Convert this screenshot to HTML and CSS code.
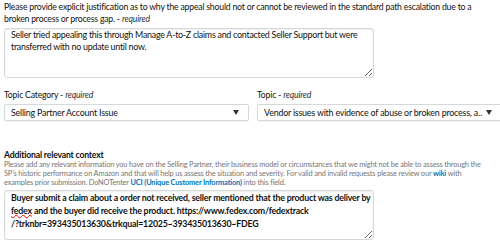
FILE: index.html
```html
<!DOCTYPE html>
<html>
<head>
<meta charset="utf-8">
<link rel="stylesheet" href="styles.css">
</head>
<body>
<div class="page">
  <div class="field">
    <div class="label">Please provide explicit justification as to why the appeal should not or cannot be reviewed in the standard path escalation due to a<br>broken process or process gap. - <i>required</i></div>
    <div class="textarea ta1">Seller tried appealing this through Manage A-to-Z claims and contacted Seller Support but were<br>transferred with no update until now.</div>
  </div>
  <div class="row">
    <div class="col">
      <div class="label">Topic Category - <i>required</i></div>
      <div class="select"><span class="sel-text">Selling Partner Account Issue</span><span class="caret"></span></div>
    </div>
    <div class="col">
      <div class="label">Topic - <i>required</i></div>
      <div class="select"><span class="sel-text">Vendor issues with evidence of abuse or broken process, a…</span><span class="caret"></span></div>
    </div>
  </div>
  <div class="field context">
    <div class="title">Additional relevant context</div>
    <div class="desc">Please add any relevant information you have on the Selling Partner, their business model or circumstances that we might not be able to assess through the<br>SP's historic performance on Amazon and that will help us assess the situation and severity. For valid and invalid requests please review our <a class="link">wiki</a> with<br>examples prior submission. DoNOTenter <a class="link">UCI (Unique Customer Information)</a> into this field.</div>
    <div class="textarea ta3">Buyer submit a claim about a order not received, seller mentioned that the product was deliver by<br><span class="spell">fedex</span> and the buyer did receive the product. https://www.fedex.com/fedextrack<br>/?trknbr=393435013630&amp;trkqual=12025~393435013630~FDEG</div>
  </div>
</div>
</body>
</html>
```
FILE: styles.css
```css
html, body {
  margin: 0;
  padding: 0;
  background: #fff;
  overflow: hidden;
}
body {
  font-family: Lato, "Liberation Sans", sans-serif;
  color: #0f1111;
}
.page {
  padding: 1px 0 0 4px;
  width: 600px;
}
.label {
  font-size: 8.7px;
  letter-spacing: -0.2px;
  line-height: 12px;
  color: #0f1111;
  white-space: nowrap;
}
.label i {
  font-style: italic;
  color: #333;
}
.textarea {
  box-sizing: border-box;
  width: 370px;
  height: 50px;
  border: 1px solid #d5d9d9;
  border-radius: 3px;
  box-shadow: inset 0 1px 2px rgba(15,17,17,0.08);
  resize: vertical;
  overflow: hidden;
  background: #fff;
  white-space: nowrap;
  padding: 0 6px;
}
.ta1 {
  margin-top: 3px;
  font-size: 8.9px;
  letter-spacing: -0.25px;
  line-height: 12px;
  color: #0f1111;
}
.row {
  display: grid;
  grid-template-columns: 245px 245px;
  column-gap: 8px;
  margin-top: 11px;
}
.select {
  box-sizing: border-box;
  margin-top: 3px;
  height: 17px;
  border: 1px solid #d5d9d9;
  border-radius: 2px;
  box-shadow: 0 1px 1px rgba(15,17,17,0.06);
  display: flex;
  align-items: center;
  padding: 0 9px 0 6px;
  font-size: 8.9px;
  letter-spacing: -0.2px;
  color: #0f1111;
  white-space: nowrap;
  background: #fff;
}
.sel-text {
  flex: 1;
  overflow: hidden;
}
.caret {
  width: 0;
  height: 0;
  border-left: 3.5px solid transparent;
  border-right: 3.5px solid transparent;
  border-top: 5px solid #333;
  margin-left: 4px;
}
.context {
  margin-top: 29px;
}
.title {
  font-size: 8.7px;
  letter-spacing: -0.2px;
  line-height: 10px;
  font-weight: 700;
  color: #0f1111;
  white-space: nowrap;
}
.desc {
  font-size: 7.4px;
  letter-spacing: -0.15px;
  line-height: 9px;
  color: #767676;
  white-space: nowrap;
}
.link {
  color: #0073bb;
  font-weight: 700;
  text-decoration: none;
}
.ta3 {
  margin-top: 3px;
  font-size: 8.8px;
  letter-spacing: -0.2px;
  line-height: 13px;
  color: #0f1111;
  font-weight: 700;
}
.spell {
  text-decoration: underline wavy #e00;
  text-decoration-thickness: 1px;
  text-underline-offset: 0px;
}
```
